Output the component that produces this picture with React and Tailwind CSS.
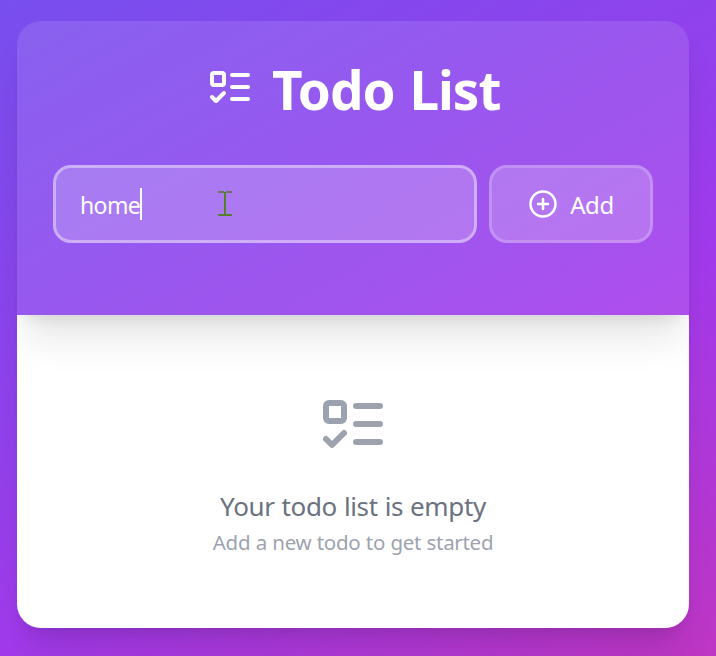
function ListTodoIcon({ className }) {
  return (
    <svg viewBox="0 0 24 24" fill="none" stroke="currentColor" strokeWidth="2" strokeLinecap="round" strokeLinejoin="round" className={className}>
      <rect x="3" y="5" width="6" height="6" rx="1" />
      <path d="m3 17 2 2 4-4" />
      <path d="M13 6h8" />
      <path d="M13 12h8" />
      <path d="M13 18h8" />
    </svg>
  );
}

function CirclePlusIcon({ className }) {
  return (
    <svg viewBox="0 0 24 24" fill="none" stroke="currentColor" strokeWidth="2" strokeLinecap="round" strokeLinejoin="round" className={className}>
      <circle cx="12" cy="12" r="10" />
      <path d="M8 12h8" />
      <path d="M12 8v8" />
    </svg>
  );
}

function TextCursor() {
  return (
    <svg width="14" height="26" viewBox="0 0 14 26" className="absolute left-[162px] top-[22px]" shapeRendering="crispEdges">
      <path d="M0 1h6v2H0zM8 1h6v2H8z" fill="#6d7560" />
      <path d="M6 2h2v22H6zM0 24h14v2H0z" fill="#57802a" />
    </svg>
  );
}

export default function App() {
  return (
    <div className="h-[656px] w-[716px] overflow-hidden bg-[linear-gradient(151deg,#784fee_0%,#8746ed_25%,#9440ec_45%,#a23aec_62%,#bf36c4_100%)] pl-[17px] pt-[21px] font-['Noto_Sans',sans-serif]">
      <div className="w-[672px] overflow-hidden rounded-3xl shadow-[0_30px_37.5px_-7.5px_rgba(0,0,0,0.1),0_12px_15px_-9px_rgba(0,0,0,0.1)]">
        <header className="relative z-10 h-[294px] bg-white/11 p-9 shadow-[0_30px_37.5px_-7.5px_rgba(0,0,0,0.1),0_12px_15px_-9px_rgba(0,0,0,0.1)]">
          <h1 className="mb-12 flex h-[60px] items-center justify-center gap-[18px] text-[53px] font-bold leading-[60px] text-white">
            <ListTodoIcon className="size-12 shrink-0" />
            <span className="w-[228px] whitespace-nowrap pt-1.5 tracking-[-1px] [word-spacing:2px]">Todo List</span>
          </h1>
          <div className="flex gap-3 text-2xl text-white">
            <div className="relative flex h-[78px] w-[424px] items-center rounded-[18px] border-3 border-white/40 bg-white/20 px-6">
              <span className="w-[60px] whitespace-nowrap pt-0.5 text-[23px] tracking-[-0.6px]">home</span>
              <span className="h-8 w-0.5 bg-white" />
              <TextCursor />
            </div>
            <button className="flex h-[78px] w-[164px] items-center justify-center gap-3 rounded-[18px] border-3 border-white/20 bg-white/20">
              <CirclePlusIcon className="size-[30px]" />
              <span className="pt-0.5 tracking-[-0.4px]">Add</span>
            </button>
          </div>
        </header>
        <main className="flex h-[313px] flex-col items-center bg-white pt-[73px]">
          <ListTodoIcon className="size-[72px] text-[#9ca3af]" />
          <p className="mt-[25px] whitespace-nowrap text-[26px] leading-[42px] tracking-[-0.35px] text-[#6b7280] [word-spacing:0.5px]">Your todo list is empty</p>
          <p className="whitespace-nowrap text-[20.5px] leading-[30px] tracking-[-0.3px] text-[#9ca3af] [word-spacing:0.4px]">Add a new todo to get started</p>
        </main>
      </div>
    </div>
  );
}
